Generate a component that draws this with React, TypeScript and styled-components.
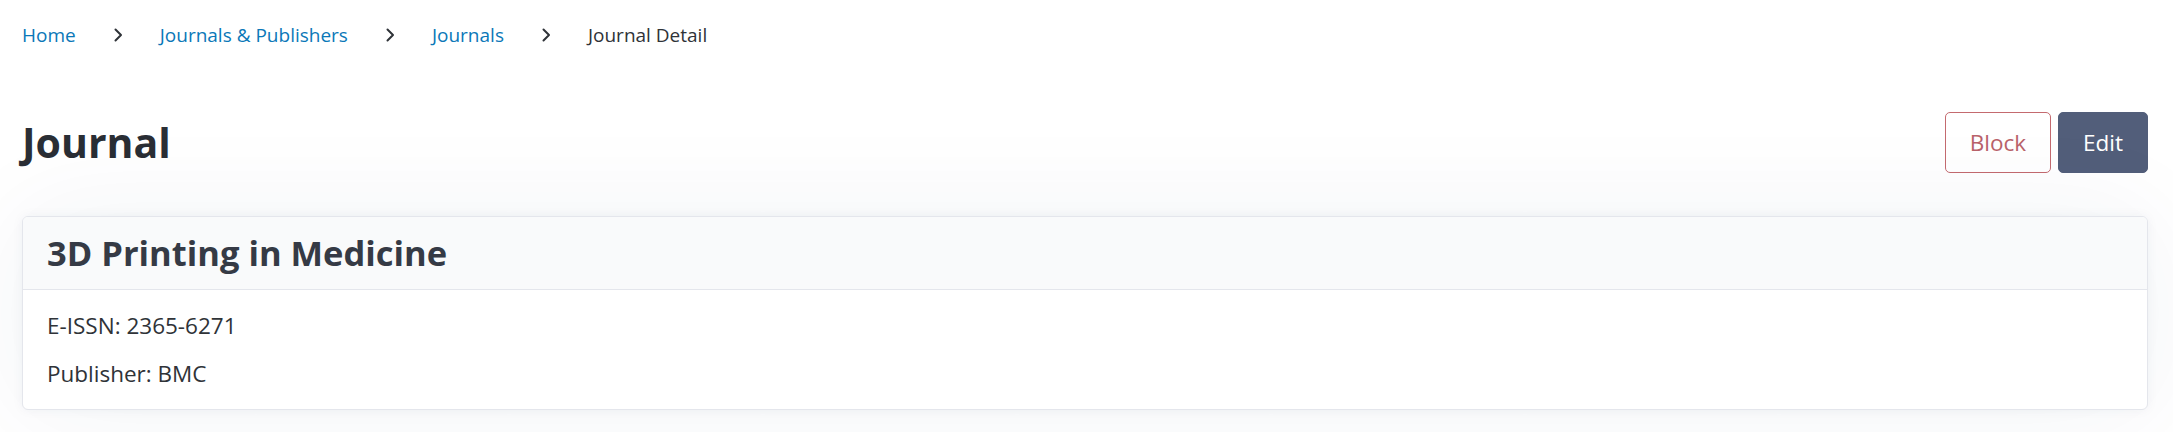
import React from "react";
import styled, { createGlobalStyle } from "styled-components";

const GlobalStyle = createGlobalStyle`
  html, body {
    margin: 0;
    padding: 0;
    background: #ffffff;
  }
  body {
    font-family: "Open Sans", "Noto Sans", sans-serif;
    color: #2f3338;
  }
  * { box-sizing: border-box; }
`;

const Page = styled.div`
  padding: 21px 22px 22px 22px;
  display: flex;
  flex-direction: column;
`;

const Breadcrumb = styled.nav`
  display: flex;
  align-items: center;
  font-size: 19px;
  line-height: 28px;
  height: 28px;
`;

const Crumb = styled.a<{ $active?: boolean }>`
  color: ${(p) => (p.$active ? "#2f3338" : "#0b78b8")};
  text-decoration: none;
`;

const Sep = styled.span`
  display: inline-flex;
  align-items: center;
  justify-content: center;
  width: 84px;
  color: #2f3338;
`;

const HeaderRow = styled.div`
  display: flex;
  align-items: center;
  justify-content: space-between;
  margin-top: 63px;
  height: 61px;
`;

const Title = styled.h1`
  margin: 0;
  font-size: 41px;
  font-weight: 700;
  color: #2a2e35;
  line-height: 1.2;
`;

const Actions = styled.div`
  display: flex;
  gap: 7px;
  margin-right: 3px;
`;

const Button = styled.button<{ $variant: "outline" | "solid" }>`
  font-family: inherit;
  font-size: 22.5px;
  height: 61px;
  padding: 0 16px;
  border-radius: 5px;
  cursor: pointer;
  border: 1px solid ${(p) => (p.$variant === "outline" ? "#c46a6f" : "#525e7a")};
  background: ${(p) => (p.$variant === "outline" ? "#ffffff" : "#525e7a")};
  color: ${(p) => (p.$variant === "outline" ? "#b9626a" : "#ffffff")};
  min-width: ${(p) => (p.$variant === "outline" ? "106px" : "90px")};
`;

const Card = styled.section`
  margin-top: 43px;
  margin-right: 3px;
  background: #ffffff;
  border: 1px solid #e4e6ec;
  border-radius: 6px;
  overflow: hidden;
  box-shadow: 0 0 12px rgba(40, 50, 100, 0.05), 0 0 110px rgba(40, 50, 110, 0.06);
`;

const CardHeader = styled.header`
  background: #f9fafb;
  border-bottom: 1px solid #e4e6ec;
  padding: 12px 24px;
  height: 73px;
  display: flex;
  align-items: center;
`;

const CardTitle = styled.h2`
  margin: 0;
  font-size: 34.5px;
  font-weight: 700;
  color: #353a45;
  line-height: 1.2;
`;

const CardBody = styled.div`
  padding: 19px 24px 19px 24px;
  display: flex;
  flex-direction: column;
  gap: 15px;
`;

const Field = styled.p`
  margin: 0;
  font-size: 22.5px;
  line-height: 33px;
  color: #2f3338;
`;

const Chevron = () => (
  <svg width="10" height="16" viewBox="0 0 10 16" fill="none">
    <path d="M2.5 2.5l5.5 5.5-5.5 5.5" stroke="#2f3338" strokeWidth="2" strokeLinecap="round" strokeLinejoin="round" />
  </svg>
);

export default function App() {
  return (
    <>
      <GlobalStyle />
      <Page>
        <Breadcrumb>
          <Crumb href="#">Home</Crumb>
          <Sep><Chevron /></Sep>
          <Crumb href="#">Journals &amp; Publishers</Crumb>
          <Sep><Chevron /></Sep>
          <Crumb href="#">Journals</Crumb>
          <Sep><Chevron /></Sep>
          <Crumb $active>Journal Detail</Crumb>
        </Breadcrumb>
        <HeaderRow>
          <Title>Journal</Title>
          <Actions>
            <Button $variant="outline">Block</Button>
            <Button $variant="solid">Edit</Button>
          </Actions>
        </HeaderRow>
        <Card>
          <CardHeader>
            <CardTitle>3D Printing in Medicine</CardTitle>
          </CardHeader>
          <CardBody>
            <Field>E-ISSN: 2365-6271</Field>
            <Field>Publisher: BMC</Field>
          </CardBody>
        </Card>
      </Page>
    </>
  );
}
